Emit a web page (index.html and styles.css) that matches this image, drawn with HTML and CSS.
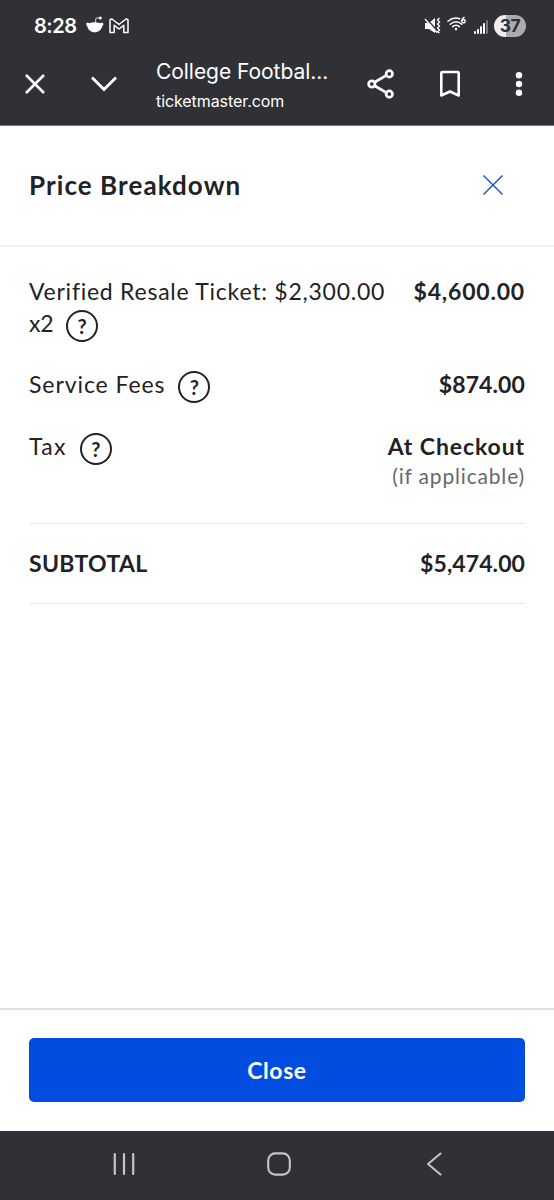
FILE: index.html
```
<!DOCTYPE html>
<html lang="en">
<head>
<meta charset="utf-8">
<meta name="viewport" content="width=device-width, initial-scale=1">
<title>Price Breakdown</title>
<link rel="stylesheet" href="styles.css">
</head>
<body>
<div class="screen">
  <header class="browser">
    <div class="status">
      <div class="status-left">
        <span class="clock">8:28</span>
        <svg class="reddit" width="20" height="20" viewBox="0 0 20 20" fill="#fff">
          <path d="M1.200 8.600Q2.500 6.800 4.200 8.200Q9.500 6.400 15 8.200Q17 6.800 18.400 8.800Q18.600 10.200 17.200 11.200C16.600 14.600 13.500 17.200 9.700 17.200S2.800 14.600 2.300 11.200Q.8 10.200 1.200 8.600Z"/>
          <path d="M10.300 8L11 3L15 3" fill="none" stroke="#ddd" stroke-width=".9"/>
          <circle cx="15.300" cy="3" r="1.500"/>
        </svg>
        <svg class="gmail" width="20" height="16" viewBox="0 0 20 16" fill="none" stroke="#fff" stroke-width="1.500" stroke-linejoin="round">
          <path d="M1 2.600Q1 1 3 1L10 6.500L17 1Q19 1 19 2.600V14.600H14.800V7.300L10 11L5.200 7.300V14.600H1Z"/>
        </svg>
      </div>
      <div class="status-right">
        <svg width="17" height="18" viewBox="0 0 17 18">
          <path d="M1 6H5L11 1V16L5 12H1Z" fill="#fff"/>
          <path d="M1.500 1L14 14.500" stroke="#303136" stroke-width="1.800"/>
          <path d="M1 2L13 15.500" stroke="#fff" stroke-width="1.300"/>
          <path d="M15.500 1L13.500 3L15.500 5L13.500 7L15.500 9L13.500 11L15.500 13L13.500 15L15.500 16" fill="none" stroke="#fff" stroke-width="1.300"/>
        </svg>
        <svg class="wifi" width="20" height="16" viewBox="0 0 20 16" fill="none" stroke="#fff" stroke-width="1.500" stroke-linecap="round">
          <path d="M1 5.300Q6.500 .5 12.600 2.700M3.300 8.200Q9 3.300 14.700 8.200M5.700 10.700Q9 8 12.300 10.700"/>
          <circle cx="9" cy="13" r=".6" fill="#fff"/>
          <circle cx="16.500" cy="5.300" r="1.700"/>
          <path d="M14.800 4.700Q15 2.400 17 1.300"/>
        </svg>
        <svg class="signal" width="15" height="16" viewBox="0 0 15 16" fill="#fff">
          <rect x="0" y="12" width="2" height="3" rx="1"/><rect x="3" y="10" width="2" height="5" rx="1"/><rect x="6" y="7" width="2" height="8" rx="1"/><rect x="9" y="4" width="2" height="11" rx="1"/><rect x="12" y="1" width="2" height="14" rx="1" fill="#77787c"/>
        </svg>
        <span class="battery">37</span>
      </div>
    </div>
    <div class="toolbar">
      <svg width="22" height="22" viewBox="0 0 22 22" stroke="#fff" stroke-width="2.600"><path d="M2 2L20 20M20 2L2 20"/></svg>
      <svg width="28" height="22" viewBox="0 0 28 22" fill="none" stroke="#fff" stroke-width="2.900"><path d="M2 4.500L14 16.500L26 4.500"/></svg>
      <div class="site">
        <div class="site-title">College Footbal...</div>
        <div class="site-host">ticketmaster.com</div>
      </div>
      <svg width="28" height="30" viewBox="0 0 28 30" fill="none" stroke="#fff" stroke-width="2.700">
        <path d="M8 13L18.500 6.800M8 17L18.500 23.200"/><circle cx="4.800" cy="15" r="3.200"/><circle cx="22.300" cy="4.900" r="3.200"/><circle cx="22.300" cy="25.100" r="3.200"/>
      </svg>
      <svg width="22" height="28" viewBox="0 0 22 28" fill="none" stroke="#fff" stroke-width="2.600" stroke-linejoin="round"><path d="M2.300 3Q2.300 2 3.300 2H18.700Q19.700 2 19.700 3V25.500L11 21.500L2.300 25.500Z"/></svg>
      <svg width="8" height="26" viewBox="0 0 8 26" fill="#fff"><circle cx="4" cy="4.300" r="3.200"/><circle cx="4" cy="13" r="3.200"/><circle cx="4" cy="21.700" r="3.200"/></svg>
    </div>
  </header>

  <div class="dialog-head">
    <h1 class="title">Price Breakdown</h1>
    <svg width="20" height="20" viewBox="0 0 20 20" stroke="#1550cb" stroke-width="1.400"><path d="M.5 .5L19.500 19.500M19.500 .5L.5 19.500"/></svg>
  </div>

  <main class="content">
    <div class="row row-ticket">
      <div class="label">
        <div class="label-first">Verified Resale Ticket: $2,300.00</div>
        <div class="label-line label-count"><span>x2</span><span class="help">?</span></div>
      </div>
      <div class="amount amount-ticket">$4,600.00</div>
    </div>
    <div class="row row-fees">
      <div class="label-line label-fees"><span>Service Fees</span><span class="help">?</span></div>
      <div class="amount amount-fees">$874.00</div>
    </div>
    <div class="row row-tax">
      <div class="label-line label-tax"><span>Tax</span><span class="help">?</span></div>
      <div class="tax-value">
        <div class="amount amount-tax">At Checkout</div>
        <div class="note">(if applicable)</div>
      </div>
    </div>
    <div class="subtotal">
      <div class="amount subtotal-label">SUBTOTAL</div>
      <div class="amount subtotal-value">$5,474.00</div>
    </div>
  </main>

  <footer class="actions"><button class="close-button">Close</button></footer>

  <nav class="system-nav">
    <svg width="24" height="24" viewBox="0 0 24 24" stroke="#c4c5cb" stroke-width="2.200" stroke-linecap="round"><path d="M2.800 2V22M12 2V22M21.200 2V22"/></svg>
    <svg width="24" height="24" viewBox="0 0 24 24" fill="none" stroke="#c4c5cb" stroke-width="2.100"><rect x="1.200" y="1.400" width="21.600" height="21.200" rx="7"/></svg>
    <svg width="16" height="24" viewBox="0 0 16 24" fill="none" stroke="#c4c5cb" stroke-width="2.100" stroke-linecap="round" stroke-linejoin="round"><path d="M14.500 1.500L2 12L14.500 22.500"/></svg>
  </nav>
</div>
</body>
</html>
```
FILE: styles.css
```
* { box-sizing: border-box; }
body { margin: 0; background: #fff; }
svg { display: block; flex: none; }
.screen {
  width: 554px;
  height: 1200px;
  display: flex;
  flex-direction: column;
  font-family: Lato, "Open Sans", sans-serif;
  color: #222224;
  white-space: nowrap;
  overflow: hidden;
}
.browser {
  height: 126px;
  flex: none;
  background: #303136;
  border-bottom: 1px solid #77787b;
  color: #fff;
  font-family: Inter, Roboto, sans-serif;
}
.status {
  height: 52px;
  display: flex;
  justify-content: space-between;
  align-items: center;
  padding: 0 28px 0 34px;
}
.status-left, .status-right { display: flex; align-items: center; }
.clock { width: 51px; font-size: 20px; font-weight: 600; letter-spacing: -.5px; }
.reddit { margin-top: -3px; }
.gmail { margin-left: 4px; }
.wifi { margin: -4px 0 0 6px; }
.signal { margin: 2px 5px 0 7px; }
.battery {
  width: 32px;
  height: 22px;
  border-radius: 11px;
  background: linear-gradient(90deg, #eeeeef 37%, #aaabae 37%);
  color: #303136;
  font-size: 17.5px;
  font-weight: 700;
  letter-spacing: -.6px;
  line-height: 22px;
  text-align: center;
}
.toolbar {
  height: 64px;
  display: grid;
  grid-template-columns: 69px 69px 1fr 69px 69px 69px;
  align-items: center;
  justify-items: center;
  padding-right: 1px;
}
.site { justify-self: start; padding: 4px 0 0 18px; }
.site-title { font-size: 21px; line-height: 30px; letter-spacing: -.05px; }
.site-host { font-size: 16px; line-height: 28px; letter-spacing: -.08px; }
.dialog-head {
  height: 121px;
  flex: none;
  display: flex;
  align-items: center;
  justify-content: space-between;
  padding: 0 51px 2px 29px;
  border-bottom: 2px solid #f2f2f2;
}
.title { margin: 0; font-size: 26px; font-weight: 700; letter-spacing: 1.07px; }
.content {
  flex: 1;
  padding: 28px 29px 0;
  font-size: 23px;
  line-height: 32px;
  letter-spacing: .5px;
}
.row { display: flex; justify-content: space-between; align-items: flex-start; }
.row-ticket { height: 93px; }
.row-fees { height: 62px; }
.row-tax { height: 93px; }
.label-line { display: flex; gap: 13px; }
.label-first { letter-spacing: .75px; }
.label-count { letter-spacing: -.3px; }
.label-fees { letter-spacing: .92px; }
.label-tax { letter-spacing: 1.3px; }
.help {
  width: 32px;
  height: 32px;
  margin-top: 3px;
  border: 2px solid #222224;
  border-radius: 50%;
  font-size: 20px;
  font-weight: 700;
  line-height: 28px;
  text-align: center;
  letter-spacing: 0;
}
.amount { font-weight: 700; }
.amount-ticket { letter-spacing: .8px; }
.amount-fees { letter-spacing: .1px; }
.amount-tax { letter-spacing: .9px; }
.tax-value { text-align: right; }
.note { color: #68686a; font-size: 21px; line-height: 28px; letter-spacing: .82px; }
.subtotal {
  height: 81px;
  display: flex;
  align-items: center;
  justify-content: space-between;
  padding-bottom: 2px;
  border-top: 1px solid #e9e9e9;
  border-bottom: 1px solid #e9e9e9;
}
.subtotal-label { letter-spacing: .3px; }
.subtotal-value { letter-spacing: .08px; }
.actions {
  height: 123px;
  flex: none;
  padding: 28px 29px;
  border-top: 2px solid #e0e0e0;
}
.close-button {
  display: block;
  width: 100%;
  height: 64px;
  padding: 1px 0 0;
  border: 0;
  border-radius: 5px;
  background: #024ddf;
  color: #fff;
  font: 700 23px/63px Lato, sans-serif;
  letter-spacing: .6px;
}
.system-nav {
  height: 69px;
  flex: none;
  display: grid;
  grid-template-columns: 155px 155px 155px;
  justify-content: center;
  justify-items: center;
  padding: 21px 0 0 4px;
  background: #303136;
}
```
